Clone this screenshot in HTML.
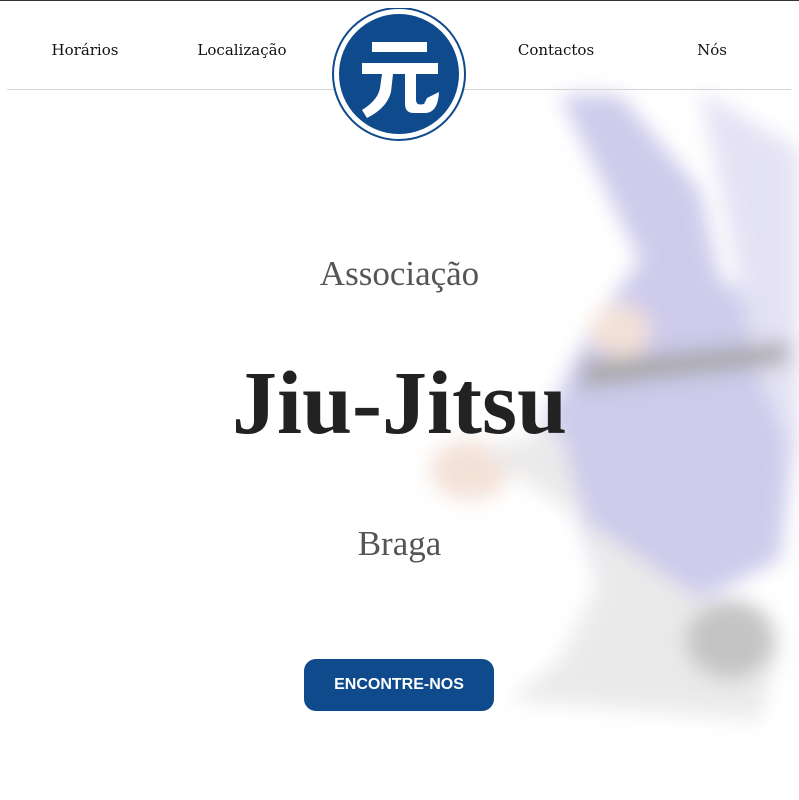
<!DOCTYPE html>
<html><head><meta charset="utf-8"><style>
body{margin:0;width:799px;height:800px;overflow:hidden;background:#fff;position:relative;font-family:"DejaVu Serif","Liberation Serif",serif}
.top{position:absolute;left:0;top:0;width:799px;height:1px;background:#333}
.line{position:absolute;left:7px;top:89px;width:784px;height:1px;background:#d4d4d4}
.nav{position:absolute;top:41px;font-size:15px;color:#111;transform:translateX(-50%)}
.bg{position:absolute;left:0;top:0}
h2{position:absolute;margin:0;width:799px;text-align:center;font-weight:normal;color:#555;font-family:"Liberation Serif",serif}
.btn{position:absolute;left:304px;top:659px;width:190px;height:52px;border-radius:12px;background:#0f4a8c;color:#fff;font:bold 16px "Liberation Sans",sans-serif;text-align:center;line-height:52px}
</style></head><body>
<svg class="bg" width="799" height="800">
<defs><filter id="b"><feGaussianBlur stdDeviation="10"/></filter></defs>
<g filter="url(#b)" opacity="0.5">
<path d="M560 95 L620 95 L700 190 L720 280 L780 310 L790 470 L780 560 L700 600 L600 590 L580 520 L540 430 L590 330 L640 260 Z" fill="#9d98d8"/>
<path d="M700 90 L799 150 L799 470 L760 380 Z" fill="#c9c6ea"/>
<ellipse cx="470" cy="470" rx="40" ry="30" fill="#e7c4b0"/>
<ellipse cx="620" cy="330" rx="30" ry="25" fill="#e7c4b0"/>
<path d="M480 450 L560 430 L600 580 L560 660 L510 700 L760 720 L780 640 L700 600 Z" fill="#d8d6d6"/>
<ellipse cx="730" cy="640" rx="45" ry="40" fill="#8a8a8a"/>
<path d="M580 360 L790 340 L790 365 L580 390 Z" fill="#555"/>
</g>
</svg>
<div class="top"></div>
<div class="line"></div>
<div class="nav" style="left:85px">Horários</div>
<div class="nav" style="left:242px">Localização</div>
<div class="nav" style="left:556px">Contactos</div>
<div class="nav" style="left:712px">Nós</div>
<svg style="position:absolute;left:332px;top:8px" width="134" height="134">
<circle cx="67" cy="66" r="66" fill="#fff" stroke="#0f4a8c" stroke-width="2"/>
<circle cx="67" cy="66" r="60" fill="#0f4a8c"/>
<rect x="40" y="34" width="55" height="10" fill="#fff"/>
<rect x="30" y="55" width="76" height="11" fill="#fff"/>
<path d="M50 66 L61 66 L59 84 Q55 100 35 110 L30 102 Q46 92 48 80 Z" fill="#fff"/>
<path d="M73 66 L84 66 L84 92 Q84 98 92 96 L95 90 L107 84 Q106 104 94 105 L82 105 Q73 105 73 96 Z" fill="#fff"/>
</svg>
<h2 style="top:254px;font-size:35px;color:#555">Associação</h2>
<h2 style="top:352px;font-size:90px;font-weight:bold;color:#222">Jiu-Jitsu</h2>
<h2 style="top:524px;font-size:35px;color:#555">Braga</h2>
<div class="btn">ENCONTRE-NOS</div>
</body></html>
